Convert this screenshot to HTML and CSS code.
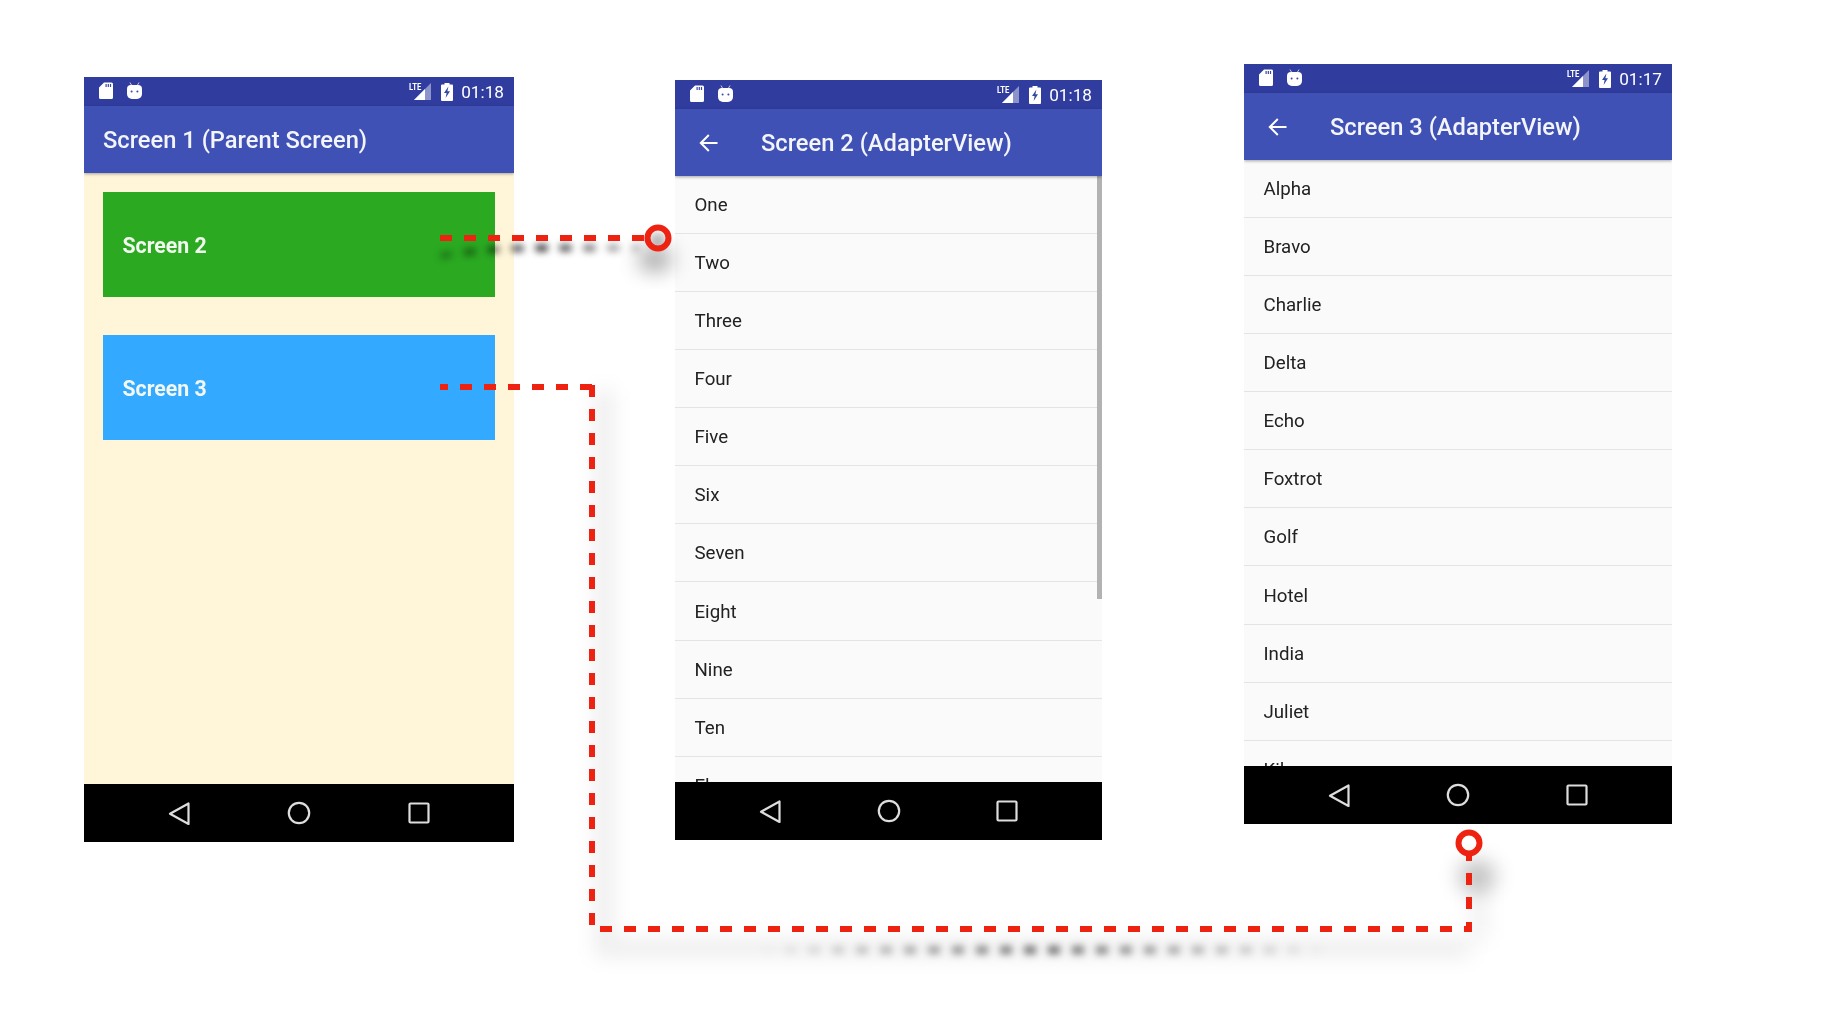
FILE: index.html
```html
<!DOCTYPE html>
<html lang="en">
<head>
  <meta charset="UTF-8">
  <meta name="viewport" content="width=device-width, initial-scale=1.0">
  <title>Screen navigation</title>
  <link rel="stylesheet" href="styles.css">
</head>
<body>

  <svg class="sprites" width="0" height="0">
    <symbol id="ic-sd" viewBox="0 0 14 17">
      <path d="M5 0.5H12.5A1.5 1.5 0 0 1 14 2V15.5A1.5 1.5 0 0 1 12.5 17H1.5A1.5 1.5 0 0 1 0 15.5V5.5Z" fill="#fff"/>
      <path d="M6.5 2h1.2v3H6.5zM8.7 2h1.2v3H8.7zM10.9 2h1.2v3h-1.2z" fill="#3a479f"/>
    </symbol>
    <symbol id="ic-droid" viewBox="0 0 15 17">
      <path d="M3 0.5L4.8 3.6M12 0.5L10.2 3.6" stroke="#d8daf0" stroke-width="0.9" fill="none"/>
      <path d="M4 3H11A4 4 0 0 1 15 7V12A5 5 0 0 1 10 17H5A5 5 0 0 1 0 12V7A4 4 0 0 1 4 3Z" fill="#fff"/>
      <circle cx="4.6" cy="9.4" r="1" fill="#3a479f"/>
      <circle cx="10.4" cy="9.4" r="1" fill="#3a479f"/>
    </symbol>
    <symbol id="ic-signal" viewBox="0 0 17 17">
      <path d="M17 0V17H0Z" fill="#fff" fill-opacity="0.45"/>
      <path d="M11 6V17H0Z" fill="#fff"/>
    </symbol>
    <symbol id="ic-battery" viewBox="0 0 12 18">
      <path d="M3.5 0H8.5V1.5H11A1 1 0 0 1 12 2.5V17A1 1 0 0 1 11 18H1A1 1 0 0 1 0 17V2.5A1 1 0 0 1 1 1.5H3.5Z" fill="#fff"/>
      <path d="M7.4 3.4L3 10H5.6L4.6 15L9 8.2H6.4Z" fill="#3348a0"/>
    </symbol>
    <symbol id="ic-arrow" viewBox="0 0 19 18">
      <path d="M18.5 9H2M9.8 1L1.8 9L9.8 17" fill="none" stroke="#fff" stroke-width="2"/>
    </symbol>
    <symbol id="ic-back" viewBox="0 0 24 24">
      <path d="M21.5 2.5V23L3 12.7Z" fill="none" stroke="#ddd" stroke-width="2.2" stroke-linejoin="round"/>
    </symbol>
    <symbol id="ic-home" viewBox="0 0 24 24">
      <circle cx="12" cy="12" r="10.2" fill="none" stroke="#ddd" stroke-width="2.2"/>
    </symbol>
    <symbol id="ic-recent" viewBox="0 0 24 24">
      <rect x="2.5" y="2.5" width="19" height="19" rx="1" fill="none" stroke="#ddd" stroke-width="2.2"/>
    </symbol>
  </svg>

  <main class="board">

    <section class="phone phone-one">
      <div class="status-bar">
        <svg class="ic-sd"><use href="#ic-sd"/></svg>
        <svg class="ic-droid"><use href="#ic-droid"/></svg>
        <span class="status-right">
          <span class="signal"><span class="lte">LTE</span><svg class="ic-signal"><use href="#ic-signal"/></svg></span>
          <svg class="ic-battery"><use href="#ic-battery"/></svg>
          <span class="clock">01:18</span>
        </span>
      </div>
      <header class="app-bar">
        <h1 class="app-title">Screen 1 (Parent Screen)</h1>
      </header>
      <div class="content content-parent">
        <button class="big-btn btn-green">Screen 2</button>
        <button class="big-btn btn-blue">Screen 3</button>
      </div>
      <nav class="nav-bar">
        <svg class="nav-icon"><use href="#ic-back"/></svg>
        <svg class="nav-icon"><use href="#ic-home"/></svg>
        <svg class="nav-icon"><use href="#ic-recent"/></svg>
      </nav>
    </section>

    <section class="phone phone-two">
      <div class="status-bar">
        <svg class="ic-sd"><use href="#ic-sd"/></svg>
        <svg class="ic-droid"><use href="#ic-droid"/></svg>
        <span class="status-right">
          <span class="signal"><span class="lte">LTE</span><svg class="ic-signal"><use href="#ic-signal"/></svg></span>
          <svg class="ic-battery"><use href="#ic-battery"/></svg>
          <span class="clock">01:18</span>
        </span>
      </div>
      <header class="app-bar">
        <svg class="ic-arrow"><use href="#ic-arrow"/></svg>
        <h1 class="app-title">Screen 2 (AdapterView)</h1>
      </header>
      <div class="content">
        <ul class="list">
          <li>One</li>
          <li>Two</li>
          <li>Three</li>
          <li>Four</li>
          <li>Five</li>
          <li>Six</li>
          <li>Seven</li>
          <li>Eight</li>
          <li>Nine</li>
          <li>Ten</li>
          <li>Eleven</li>
        </ul>
        <div class="scrollbar"></div>
      </div>
      <nav class="nav-bar">
        <svg class="nav-icon"><use href="#ic-back"/></svg>
        <svg class="nav-icon"><use href="#ic-home"/></svg>
        <svg class="nav-icon"><use href="#ic-recent"/></svg>
      </nav>
    </section>

    <section class="phone phone-three">
      <div class="status-bar">
        <svg class="ic-sd"><use href="#ic-sd"/></svg>
        <svg class="ic-droid"><use href="#ic-droid"/></svg>
        <span class="status-right">
          <span class="signal"><span class="lte">LTE</span><svg class="ic-signal"><use href="#ic-signal"/></svg></span>
          <svg class="ic-battery"><use href="#ic-battery"/></svg>
          <span class="clock">01:17</span>
        </span>
      </div>
      <header class="app-bar">
        <svg class="ic-arrow"><use href="#ic-arrow"/></svg>
        <h1 class="app-title">Screen 3 (AdapterView)</h1>
      </header>
      <div class="content">
        <ul class="list">
          <li>Alpha</li>
          <li>Bravo</li>
          <li>Charlie</li>
          <li>Delta</li>
          <li>Echo</li>
          <li>Foxtrot</li>
          <li>Golf</li>
          <li>Hotel</li>
          <li>India</li>
          <li>Juliet</li>
          <li>Kilo</li>
        </ul>
      </div>
      <nav class="nav-bar">
        <svg class="nav-icon"><use href="#ic-back"/></svg>
        <svg class="nav-icon"><use href="#ic-home"/></svg>
        <svg class="nav-icon"><use href="#ic-recent"/></svg>
      </nav>
    </section>

  </main>

  <!-- arrows between the screens, they lie over the phones -->
  <svg class="links" viewBox="0 0 1838 1020">
    <defs>
      <filter id="blur-soft" filterUnits="userSpaceOnUse" x="0" y="0" width="1838" height="1020"><feGaussianBlur stdDeviation="10"/></filter>
      <filter id="blur-dots" filterUnits="userSpaceOnUse" x="0" y="0" width="1838" height="1020"><feGaussianBlur stdDeviation="3.5"/></filter>
      <filter id="blur-blob" x="-100%" y="-100%" width="300%" height="300%"><feGaussianBlur stdDeviation="11"/></filter>
      <filter id="blur-pin" x="-100%" y="-100%" width="300%" height="300%"><feGaussianBlur stdDeviation="3"/></filter>
      <linearGradient id="fade-top" gradientUnits="userSpaceOnUse" x1="440" y1="0" x2="650" y2="0">
        <stop offset="0" stop-color="#000" stop-opacity="0.25"/>
        <stop offset="0.5" stop-color="#000" stop-opacity="0.8"/>
        <stop offset="1" stop-color="#000" stop-opacity="0.12"/>
      </linearGradient>
      <linearGradient id="fade-bottom" gradientUnits="userSpaceOnUse" x1="760" y1="0" x2="1330" y2="0">
        <stop offset="0" stop-color="#000" stop-opacity="0"/>
        <stop offset="0.5" stop-color="#000" stop-opacity="0.5"/>
        <stop offset="1" stop-color="#000" stop-opacity="0"/>
      </linearGradient>
    </defs>

    <g class="shadows">
      <path d="M440 256 Q480 249 530 248 H640" fill="none" stroke="url(#fade-top)" stroke-width="7" stroke-dasharray="12 12" filter="url(#blur-dots)"/>
      <ellipse cx="655" cy="259" rx="15" ry="10" fill="#000" opacity="0.5" filter="url(#blur-blob)"/>
      <circle cx="658" cy="240" r="8" fill="#000" opacity="0.2" filter="url(#blur-pin)"/>

      <path d="M604 390 V948 H1470" fill="none" stroke="#000" stroke-opacity="0.08" stroke-width="16" filter="url(#blur-soft)"/>
      <path d="M1479 870 V940" fill="none" stroke="#000" stroke-opacity="0.06" stroke-width="16" filter="url(#blur-soft)"/>
      <ellipse cx="1477" cy="876" rx="18" ry="15" fill="#000" opacity="0.26" filter="url(#blur-blob)"/>
      <path d="M760 950 H1330" fill="none" stroke="url(#fade-bottom)" stroke-width="9" stroke-dasharray="12 12" filter="url(#blur-dots)"/>
    </g>

    <path class="dash" d="M440 238 H646"/>
    <circle class="pin" cx="658" cy="238" r="10.5"/>

    <path class="dash" d="M440 387 H448 M460 387 H592 M592 385 V925 M600 929 H1464"/>
    <path class="dash-solid" d="M1464 929 H1472"/>
    <path class="dash" d="M1469 932 V922 M1469 909 V856"/>
    <circle class="pin" cx="1469" cy="843" r="10.5"/>
  </svg>

</body>
</html>
```

FILE: styles.css
```css
* {
  box-sizing: border-box;
}

html, body {
  margin: 0;
  height: 100%;
}

body {
  position: relative;
  overflow: hidden;
  background-color: #fff;
  font-family: Roboto, "Noto Sans", sans-serif;
}

.sprites {
  display: block;
  height: 0;
}

.board {
  display: flex;
  align-items: flex-start;
  padding-left: 84px;
}

/* phones */
.phone {
  display: flex;
  flex-direction: column;
  flex: none;
  overflow: hidden;
  filter: blur(0.35px);
}

.phone-one {
  width: 430px;
  height: 765px;
  margin-top: 77px;
  margin-right: 161px;
}

.phone-two {
  width: 427px;
  height: 760px;
  margin-top: 80px;
  margin-right: 142px;
}

.phone-three {
  width: 428px;
  height: 760px;
  margin-top: 64px;
}

/* status bar */
.status-bar {
  display: flex;
  align-items: center;
  flex: none;
  height: 29px;
  padding: 0 10px 0 15px;
  background-color: #303d9f;
  color: #fff;
}

.ic-sd {
  width: 14px;
  height: 17px;
  margin-right: 14px;
  margin-bottom: 2px;
}

.ic-droid {
  width: 15px;
  height: 17px;
  margin-bottom: 2px;
}

.status-right {
  display: flex;
  align-items: center;
  margin-left: auto;
}

.signal {
  position: relative;
  display: flex;
  width: 22px;
  justify-content: flex-end;
  margin-right: 10px;
}

.ic-signal {
  width: 17px;
  height: 17px;
}

.lte {
  position: absolute;
  left: 0;
  top: 0;
  font-size: 9px;
  font-weight: 700;
  line-height: 9px;
  transform: scaleX(0.85);
  transform-origin: left top;
}

.ic-battery {
  width: 12px;
  height: 18px;
  margin-right: 8px;
}

.clock {
  font-size: 17.2px;
}

/* action bar */
.app-bar {
  position: relative;
  z-index: 1;
  display: flex;
  align-items: center;
  flex: none;
  height: 66.5px;
  padding: 1.5px 0 0 19px;
  background-color: #3f51b5;
  box-shadow: 0 1px 3px rgba(0, 0, 0, 0.35);
}

.phone-two .app-bar,
.phone-three .app-bar {
  padding-left: 24px;
}

.ic-arrow {
  width: 19px;
  height: 18px;
  margin-right: 43px;
}

.app-title {
  margin: 0;
  color: #f4f5fb;
  font-size: 23.7px;
  font-weight: 500;
}

/* content */
.content {
  position: relative;
  flex: 1;
  overflow: hidden;
  background-color: #fafafa;
}

.content-parent {
  padding: 19.5px 19px 19px;
  background-color: #fff6da;
}

.big-btn {
  display: block;
  width: 100%;
  height: 105px;
  margin-bottom: 38px;
  padding: 2px 0 0 19.5px;
  border: 0;
  color: #f2f7ef;
  font-family: inherit;
  font-size: 21.3px;
  font-weight: 700;
  text-align: left;
}

.btn-green {
  background-color: #2aa921;
}

.btn-blue {
  background-color: #33a9ff;
}

.list {
  margin: 0;
  padding: 0;
  list-style: none;
}

.list li {
  display: flex;
  align-items: center;
  height: 58.15px;
  padding: 1px 0 0 19.5px;
  border-bottom: 1.5px solid #e4e4e4;
  color: #222;
  font-size: 18.7px;
}

.scrollbar {
  position: absolute;
  top: 0;
  right: 0;
  width: 5px;
  height: 423px;
  background-color: #b2b2b2;
}

/* nav bar */
.nav-bar {
  display: flex;
  align-items: center;
  justify-content: space-between;
  flex: none;
  height: 58px;
  padding: 0 83px;
  background-color: #000;
}

.nav-icon {
  width: 24px;
  height: 24px;
}

/* connector overlay */
.links {
  position: absolute;
  left: 0;
  top: 0;
  width: 1838px;
  height: 1020px;
  pointer-events: none;
}

.dash {
  fill: none;
  stroke: #ee2211;
  stroke-width: 6;
  stroke-dasharray: 12 12;
}

.dash-solid {
  fill: none;
  stroke: #ee2211;
  stroke-width: 6;
}

.pin {
  fill: none;
  stroke: #ee2211;
  stroke-width: 6;
}
```
